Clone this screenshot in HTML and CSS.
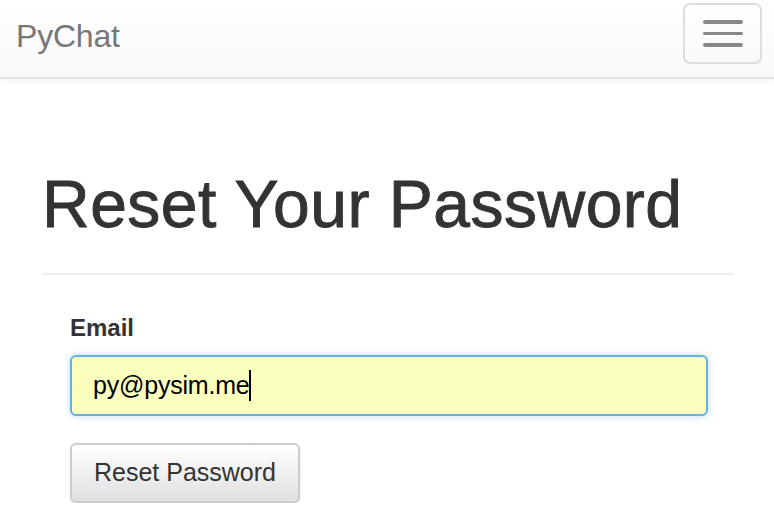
FILE: index.html
```html
<!DOCTYPE html>
<html>
<head>
<meta charset="utf-8">
<link rel="stylesheet" href="styles.css">
</head>
<body>
<nav class="navbar">
  <a class="brand">PyChat</a>
  <button class="toggle"><span class="bar"></span><span class="bar"></span><span class="bar"></span></button>
</nav>
<main class="container">
  <div class="page-header"><h1>Reset Your Password</h1></div>
  <form class="form">
    <label class="label">Email</label>
    <div class="input"><span class="value">py@pysim.me</span><span class="caret"></span></div>
    <button class="btn" type="button">Reset Password</button>
  </form>
</main>
</body>
</html>
```
FILE: styles.css
```css
html, body { margin: 0; padding: 0; background: #fff; }
body { font-family: "Liberation Sans", Arial, sans-serif; color: #333; }
.navbar {
  height: 77px;
  display: flex;
  align-items: flex-start;
  justify-content: space-between;
  background: linear-gradient(#fff, #f8f8f8);
  border-bottom: 2px solid #e3e3e3;
  box-shadow: 0 2px 5px rgba(0,0,0,0.06);
}
.brand {
  font-size: 32px;
  color: #777;
  line-height: 1;
  margin: 20px 0 0 16px;
  letter-spacing: -0.2px;
}
.toggle {
  width: 79px;
  height: 61px;
  margin: 3px 12px 0 0;
  border: 2px solid #ddd;
  border-radius: 7px;
  background: transparent;
  display: flex;
  flex-direction: column;
  align-items: center;
  justify-content: center;
  gap: 8px;
  padding: 0;
}
.bar { display: block; width: 40px; height: 4px; border-radius: 2px; background: #888; }
.bar:nth-child(2) { height: 3px; }
.container { margin: 0 40px 0 42px; }
.page-header {
  padding: 89px 0 32px 0;
  border-bottom: 2px solid #eee;
}
h1 {
  margin: 0;
  font-size: 66px;
  font-weight: normal;
  line-height: 1.1;
  color: #333;
  letter-spacing: 0.5px;
  -webkit-text-stroke: 0.9px #333;
}
.form { padding: 36px 26px 0 28px; display: flex; flex-direction: column; align-items: flex-start; }
.label { font-size: 24px; font-weight: bold; line-height: 34px; color: #333; }
.input {
  box-sizing: border-box;
  width: 100%;
  height: 61px;
  margin-top: 10px;
  border: 2px solid #66afe9;
  border-radius: 6px;
  background: #faffbd;
  box-shadow: 0 0 7px rgba(102,175,233,0.45);
  display: flex;
  align-items: center;
  padding-left: 21px;
  font-size: 25px;
  letter-spacing: -0.2px;
  color: #000;
}
.caret { display: inline-block; width: 2px; height: 31px; background: #000; margin-left: -1px; }
.btn {
  margin-top: 27px;
  box-sizing: border-box;
  width: 230px;
  height: 60px;
  border: 2px solid #ccc;
  border-radius: 6px;
  background: linear-gradient(#fff, #e0e0e0);
  box-shadow: 0 1px 3px rgba(0,0,0,0.1);
  font-family: "Liberation Sans", Arial, sans-serif;
  font-size: 25px;
  color: #333;
  padding: 0;
}
```
